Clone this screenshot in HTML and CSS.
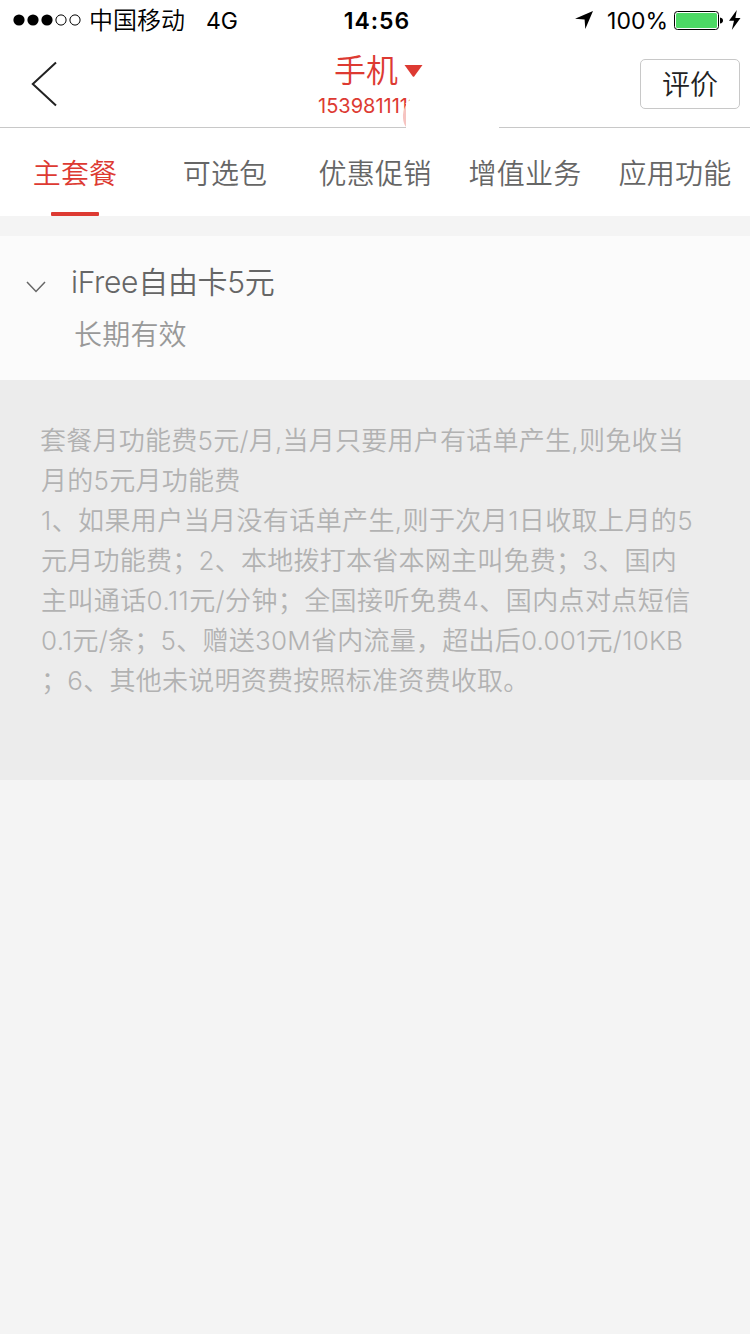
FILE: index.html
```html
<!DOCTYPE html>
<html lang="zh-CN">
<head>
  <meta charset="UTF-8">
  <meta name="viewport" content="width=device-width, initial-scale=1.0">
  <title>手机套餐</title>
  <link rel="stylesheet" href="styles.css">
</head>
<body>
  <!-- Status bar -->
  <div class="status-bar">
    <div class="status-left">
      <svg class="signal" width="68" height="12" viewBox="0 0 68 12">
        <circle cx="6" cy="6" r="5.6"/>
        <circle cx="20" cy="6" r="5.6"/>
        <circle cx="34" cy="6" r="5.6"/>
        <circle class="empty" cx="48" cy="6" r="5.1"/>
        <circle class="empty" cx="62" cy="6" r="5.1"/>
      </svg>
      <span class="carrier">中国移动</span>
      <span class="network">4G</span>
    </div>
    <div class="status-time">14:56</div>
    <div class="status-right">
      <svg class="location" width="18" height="18" viewBox="0 0 18 18">
        <path d="M18 0L10.3 18L9.6 8.4L0 7.7Z"/>
      </svg>
      <span class="percent">100%</span>
      <svg class="battery" width="50" height="19" viewBox="0 0 50 19">
        <rect class="shell" x="0.5" y="0.5" width="44" height="18" rx="3"/>
        <rect class="level" x="2" y="2" width="41" height="15" rx="1.5"/>
        <path d="M46 6.5Q49 7 49 9.5T46 12.5Z"/>
      </svg>
      <svg class="bolt" width="12" height="20" viewBox="0 0 12 20">
        <path d="M7.8 0L0 10.8H5L2.8 20L11.5 8H6.4Z"/>
      </svg>
    </div>
  </div>

  <!-- Header -->
  <header class="header">
    <svg class="back" width="26" height="46" viewBox="0 0 26 46">
      <path d="M25 1.5L1.8 23L25 44.5"/>
    </svg>
    <div class="title">
      <div class="title-name">手机<svg class="caret" width="19" height="12" viewBox="0 0 19 12"><path d="M0.5 0H18.5L10.2 11.4Q9.5 12 8.8 11.4Z"/></svg></div>
      <div class="title-number">1539811111</div>
      <svg class="number-mask" width="97" height="31" viewBox="0 0 97 31">
        <path class="cover" d="M3 7L8 3V0H97V31H4V7Z"/>
        <path class="smudge" d="M4 8Q0.5 14 1 21Q1.5 27 4 30Z"/>
      </svg>
    </div>
    <button class="rate-btn">评价</button>
  </header>

  <!-- Tabs -->
  <nav class="tabs">
    <div class="tab active">主套餐</div>
    <div class="tab">可选包</div>
    <div class="tab">优惠促销</div>
    <div class="tab">增值业务</div>
    <div class="tab">应用功能</div>
  </nav>

  <!-- Package -->
  <section class="package">
    <svg class="chevron" width="20" height="12" viewBox="0 0 20 12">
      <path d="M1 1L10 10.5L19 1"/>
    </svg>
    <div class="package-info">
      <div class="package-name">iFree自由卡5元</div>
      <div class="package-term">长期有效</div>
    </div>
  </section>

  <section class="detail">
    <div class="line line-1">套餐月功能费5元/月,当月只要用户有话单产生,则免收当</div>
    <div class="line line-2">月的5元月功能费</div>
    <div class="line line-3">1、如果用户当月没有话单产生,则于次月1日收取上月的5</div>
    <div class="line line-4">元月功能费；2、本地拨打本省本网主叫免费；3、国内</div>
    <div class="line line-5">主叫通话0.11元/分钟；全国接听免费4、国内点对点短信</div>
    <div class="line line-6">0.1元/条；5、赠送30M省内流量，超出后0.001元/10KB</div>
    <div class="line line-7">；6、其他未说明资费按照标准资费收取。</div>
  </section>
</body>
</html>
```

FILE: styles.css
```css
/* General Styles */
* {
  box-sizing: border-box;
}

body {
  margin: 0;
  font-family: Inter, 'Noto Sans CJK SC', sans-serif;
  font-weight: 350;
  background-color: #f4f4f4;
  color: #666;
  white-space: nowrap;
}

svg {
  display: block;
  flex: none;
}

/* Status bar */
.status-bar {
  display: grid;
  grid-template-columns: 1fr auto 1fr;
  align-items: center;
  height: 40px;
  padding: 0 9px 1px 13px;
  background-color: #fff;
  color: #000;
  font-size: 24px;
  line-height: 38px;
}

.status-left,
.status-right {
  display: flex;
  align-items: center;
}

.status-right {
  justify-content: flex-end;
}

.signal .empty {
  fill: none;
  stroke: #000;
}

.carrier {
  margin-left: 8px;
  padding-top: 2px;
}

.network {
  margin-left: 21px;
  padding-top: 2px;
  font-size: 23px;
  font-weight: 400;
}

.status-time {
  padding-top: 2px;
  font-weight: 600;
  font-size: 23px;
  letter-spacing: 1px;
}

.percent {
  margin: 0 6px 0 14px;
  padding-top: 2px;
  font-size: 23px;
  font-weight: 400;
}

.battery .shell {
  fill: #fff;
  stroke: #000;
}

.battery .level {
  fill: #4cd964;
}

.bolt {
  margin-left: 5px;
}

/* Header */
.header {
  display: grid;
  grid-template-columns: 1fr auto 1fr;
  height: 88px;
  padding: 0 10px;
  background-color: #fff;
  border-bottom: 1px solid #c8c8c8;
}

.back {
  margin: 21px 0 0 21px;
  fill: none;
  stroke: #222;
  stroke-width: 2;
}

.title {
  position: relative;
  width: 114px;
  color: #dd3a32;
}

.title-name {
  display: flex;
  align-items: center;
  padding: 10px 0 0 16px;
  font-size: 32px;
  line-height: 42px;
}

.caret {
  margin-left: 6px;
  fill: #dd3a32;
}

.title-number {
  padding-top: 1px;
  font-size: 20px;
  font-weight: 400;
  line-height: 26px;
}

/* White patch over the last digits of the number */
.number-mask {
  position: absolute;
  left: 84px;
  top: 57px;
}

.number-mask .cover {
  fill: #fff;
}

.number-mask .smudge {
  fill: #f6c4c1;
}

.rate-btn {
  justify-self: end;
  width: 100px;
  height: 50px;
  margin-top: 19px;
  padding: 3px 0 0;
  background-color: #fff;
  border: 1px solid #c8c8c8;
  border-radius: 5px;
  color: #222;
  font: inherit;
  font-size: 28px;
  line-height: 45px;
}

/* Tabs */
.tabs {
  display: grid;
  grid-template-columns: repeat(5, 1fr);
  height: 88px;
  padding-top: 4px;
  background-color: #fff;
}

.tab {
  display: flex;
  flex-direction: column;
  align-items: center;
  font-size: 28px;
  line-height: 84px;
  letter-spacing: 0.2px;
}

.tab.active {
  color: #dd3a32;
}

.tab.active::after {
  content: '';
  width: 48px;
  height: 4px;
  margin-top: -4px;
  border-radius: 1px;
  background-color: #dd3a32;
}

/* Package */
.package {
  display: flex;
  height: 144px;
  margin-top: 20px;
  padding-left: 26px;
  background-color: #fbfbfb;
}

.chevron {
  margin-top: 45px;
  fill: none;
  stroke: #666;
  stroke-width: 1.5;
}

.package-info {
  padding: 23px 0 0 25px;
}

.package-name {
  font-size: 30px;
  line-height: 46px;
  letter-spacing: -0.3px;
}

.package-term {
  padding: 2px 0 0 3px;
  color: #999;
  font-size: 28px;
  line-height: 56px;
  letter-spacing: 0.2px;
}

/* Detail */
.detail {
  height: 400px;
  padding: 41px 40px 0;
  background-color: #ececec;
  color: #b2b2b2;
  font-size: 26px;
  line-height: 40px;
}

.line {
  letter-spacing: 0.25px;
}

.line-3,
.line-5 {
  padding-left: 1px;
  letter-spacing: 0.4px;
}

.line-2,
.line-4,
.line-6,
.line-7 {
  padding-left: 1px;
}
```
